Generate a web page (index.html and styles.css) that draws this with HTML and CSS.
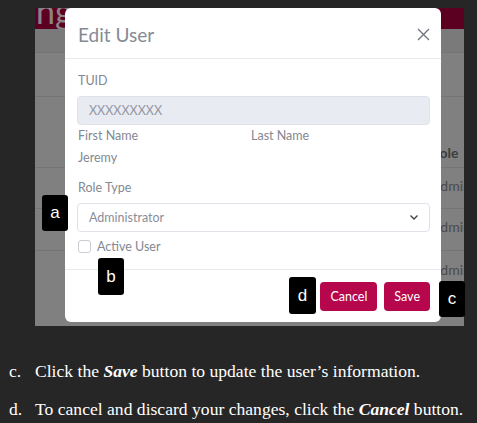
FILE: index.html
```html
<!DOCTYPE html>
<html>
<head>
<meta charset="utf-8">
<link rel="stylesheet" href="styles.css">
</head>
<body>
<div class="page">
  <div class="shot">
    <div class="topbar"><span class="title">ng</span></div>
    <div class="table">
      <div class="row r1"></div>
      <div class="row r2"></div>
      <div class="row r3"><span class="cell head">Role</span></div>
      <div class="row r4"><span class="cell">Admin</span></div>
      <div class="row r5"><span class="cell">Admin</span></div>
      <div class="row r6"><span class="cell">Admin</span></div>
    </div>
    <div class="modal">
      <div class="modal-header">
        <span class="modal-title">Edit User</span>
        <svg class="close" width="13" height="13" viewBox="0 0 13 13"><path d="M1 1 L12 12 M12 1 L1 12" stroke="#6f737b" stroke-width="1.3" fill="none"/></svg>
      </div>
      <div class="modal-body">
        <div class="label tuid">TUID</div>
        <div class="input disabled">XXXXXXXXX</div>
        <div class="names">
          <div class="label">First Name</div>
          <div class="label">Last Name</div>
          <div class="value">Jeremy</div>
          <div></div>
        </div>
        <div class="label role">Role Type</div>
        <div class="input select">
          <span>Administrator</span>
          <svg width="10" height="7" viewBox="0 0 10 7"><path d="M1.5 1.5 L5 5 L8.5 1.5" stroke="#444" stroke-width="1.4" fill="none"/></svg>
        </div>
        <label class="check"><span class="box"></span><span>Active User</span></label>
      </div>
      <div class="modal-footer">
        <button class="btn">Cancel</button>
        <button class="btn">Save</button>
      </div>
    </div>
  </div>
  <span class="badge ba">a</span>
  <span class="badge bb">b</span>
  <span class="badge bc">c</span>
  <span class="badge bd">d</span>
  <ol class="steps">
    <li><span class="mark">c.</span><span>Click the <b><i>Save</i></b> button to update the user’s information.</span></li>
    <li><span class="mark">d.</span><span>To cancel and discard your changes, click the <b><i>Cancel</i></b> button.</span></li>
  </ol>
</div>
</body>
</html>
```

FILE: styles.css
```css
html, body {
  margin: 0;
  padding: 0;
  background: #262626;
}
.page {
  position: relative;
  width: 477px;
  height: 423px;
  padding-top: 8px;
  box-sizing: border-box;
}
.shot {
  position: relative;
  margin-left: 35px;
  width: 429px;
  height: 318px;
  background: #808080;
  overflow: hidden;
  font-family: Lato, "Noto Sans", sans-serif;
}
.topbar {
  height: 21px;
  background: #5c0022;
  overflow: hidden;
}
.title {
  display: block;
  margin-top: -14px;
  padding-left: 1px;
  font-size: 34px;
  line-height: 34px;
  color: #8a8486;
}
.row {
  border-bottom: 1px solid #747474;
  position: relative;
}
.r1 { height: 23px; background: #7a7a7a; }
.r2 { height: 43px; }
.r3 { height: 70px; }
.r4 { height: 40px; }
.r5 { height: 41px; }
.r6 { height: 60px; border-bottom: none; }
.cell {
  position: absolute;
  left: 396px;
  bottom: 8px;
  font-size: 14px;
  color: #4a4a4a;
}
.r3 .cell { bottom: 6px; font-weight: 700; color: #3c3c3c; }
.r4 .cell, .r5 .cell, .r6 .cell { bottom: auto; top: 9px; }
.r6 .cell { top: 10px; }

.modal {
  position: absolute;
  left: 30px;
  top: 0;
  width: 376px;
  height: 314px;
  background: #fff;
  border-radius: 6px;
  display: flex;
  flex-direction: column;
  color: #878b95;
}
.modal-header {
  height: 51px;
  border-bottom: 1px solid #e8e9ee;
  display: flex;
  align-items: center;
  justify-content: space-between;
  padding: 0 11px 0 13px;
  box-sizing: border-box;
  flex: none;
}
.modal-title {
  font-size: 19px;
  color: #868a94;
  margin-top: 2px;
}
.close { margin-top: 2px; }
.modal-body {
  padding: 14px 11px 0 12px;
  height: 211px;
  box-sizing: border-box;
  border-bottom: 1px solid #e8e9ee;
  flex: none;
}
.label {
  font-size: 12.5px;
  line-height: 16px;
  color: #848892;
}
.tuid { margin-bottom: 7px; padding-left: 1px; }
.input {
  height: 29px;
  box-sizing: border-box;
  border: 1px solid #dfe2e9;
  border-radius: 4px;
  font-size: 12.5px;
  line-height: 27px;
  padding-left: 11px;
  color: #8a8e98;
}
.disabled {
  background: #e9ebf3;
  color: #9498a2;
}
.names {
  display: grid;
  grid-template-columns: 173px 1fr;
  row-gap: 6px;
  margin-top: 3px;
  padding-left: 1px;
}
.value {
  font-size: 12.5px;
  line-height: 16px;
  color: #848892;
}
.role { margin-top: 14px; margin-bottom: 7px; padding-left: 1px; }
.select {
  display: flex;
  align-items: center;
  justify-content: space-between;
  padding-right: 10px;
  background: #fff;
}
.check {
  display: flex;
  align-items: center;
  gap: 6px;
  margin-top: 7px;
  padding-left: 1px;
  font-size: 12.5px;
  color: #848892;
}
.box {
  width: 11px;
  height: 11px;
  border: 1px solid #c9ccd3;
  border-radius: 3px;
}
.modal-footer {
  display: flex;
  justify-content: flex-end;
  gap: 7px;
  padding: 12px 11px 0 0;
}
.btn {
  height: 29px;
  border: none;
  border-radius: 4px;
  background: #b6064c;
  color: #fff;
  font-family: Lato, "Noto Sans", sans-serif;
  font-size: 12.5px;
  padding: 0 10px;
}

.badge {
  position: absolute;
  background: #000;
  color: #fff;
  border-radius: 3px;
  font-family: "Liberation Sans", Arial, sans-serif;
  font-size: 17px;
  display: flex;
  align-items: center;
  justify-content: center;
}
.ba { left: 42px; top: 195px; width: 26px; height: 36px; }
.bb { left: 98px; top: 258px; width: 26px; height: 37px; }
.bc { left: 439px; top: 281px; width: 26px; height: 36px; }
.bd { left: 289px; top: 277px; width: 27px; height: 37px; }

.steps {
  list-style: none;
  margin: 0;
  padding: 0;
  position: absolute;
  left: 9px;
  top: 359px;
  font-family: "Liberation Serif", "Times New Roman", serif;
  font-size: 17.6px;
  color: #fff;
}
.steps li {
  display: flex;
  height: 38px;
  line-height: 24px;
}
.mark { width: 26px; }
```
